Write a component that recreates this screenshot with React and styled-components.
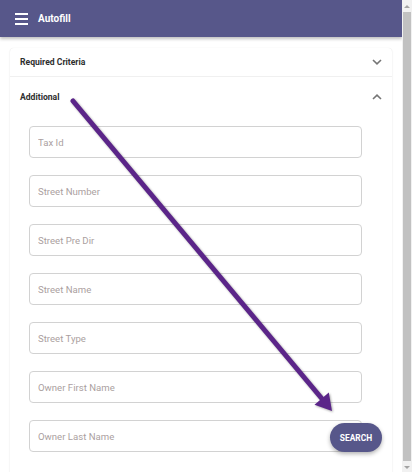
import styled, { createGlobalStyle } from "styled-components";

const GlobalStyle = createGlobalStyle`
    html, body {
        margin: 0;
        padding: 0;
        overflow: hidden;
    }
    body {
        font-family: Roboto, "Liberation Sans", sans-serif;
        background: #fff;
    }
`;

const Shell = styled.div`
    height: 472px;
    width: 412px;
    display: flex;
`;

const Page = styled.div`
    position: relative;
    flex: 1;
    overflow: hidden;
`;

// drawn scrollbar (the headless browser hides the real one)
const ScrollTrack = styled.div`
    width: 10px;
    background: #f1f1f1;
    display: flex;
    flex-direction: column;
    align-items: center;
    padding-top: 1px;
`;

const ScrollArrow = styled.div`
    height: 10px;
    display: flex;
    align-items: center;
    justify-content: center;

    &::after {
        content: "";
        border-left: 3px solid transparent;
        border-right: 3px solid transparent;
        ${(p) => (p.$down ? "border-top: 3px solid #a3a3a3;" : "border-bottom: 3px solid #a3a3a3;")}
    }
`;

const ScrollThumb = styled.div`
    flex: 1;
    width: 8px;
    margin: 1px 0;
    background: #c1c1c1;
`;

const TopBar = styled.header`
    height: 37px;
    background: #57578a;
    display: flex;
    align-items: center;
    gap: 10px;
    padding-left: 15px;
    box-shadow: 0 2px 3px rgba(0, 0, 0, 0.25);
    color: #fff;
`;

const Burger = styled.div`
    width: 13px;
    display: flex;
    flex-direction: column;
    gap: 3px;

    & > span {
        height: 2px;
        background: #fff;
    }
`;

const Title = styled.h1`
    margin: 0;
    font-size: 10px;
    font-weight: 700;
`;

const Main = styled.main`
    padding: 11px 10px 8px 10px;
`;

const Card = styled.section`
    background: #fff;
    border-radius: 4px;
    box-shadow: 0 1px 2px rgba(0, 0, 0, 0.1), 0 0 1px rgba(0, 0, 0, 0.1);
`;

const Summary = styled.div`
    height: ${(p) => (p.$open ? "40px" : "28px")};
    display: flex;
    align-items: center;
    justify-content: space-between;
    padding: 0 10px;
    border-top: ${(p) => (p.$first ? "none" : "1px solid #f0f0f0")};
    font-size: 8.6px;
    font-weight: 700;
    color: #2e2e2e;
`;

const Details = styled.div`
    display: flex;
    flex-direction: column;
    gap: 17px;
    padding: 9px 30px 30px 19px;
`;

const Field = styled.input`
    box-sizing: border-box;
    height: 32px;
    width: 100%;
    border: 1px solid #d2d2d2;
    border-radius: 4px;
    padding: 0 8px;
    font-family: Roboto, "Liberation Sans", sans-serif;
    font-size: 9.6px;
    outline: none;

    &::placeholder {
        color: #ab9f9f;
    }
`;

const Fab = styled.button`
    position: absolute;
    left: 330px;
    top: 423px;
    width: 52px;
    height: 29px;
    border: none;
    border-radius: 15px;
    background: #57578a;
    color: #fff;
    font-family: Roboto, "Liberation Sans", sans-serif;
    font-size: 8.4px;
    font-weight: 700;
    padding: 0;
    box-shadow: 0 2px 4px rgba(0, 0, 0, 0.3);
`;

const Overlay = styled.svg`
    position: absolute;
    left: 0;
    top: 0;
    pointer-events: none;
    filter: drop-shadow(1px 1px 1px rgba(0, 0, 0, 0.35));
`;

const Chevron = ({ up }) => (
    <svg width="10" height="6" viewBox="0 0 10 6">
        <path
            d={up ? "M1 5 L5 1.2 L9 5" : "M1 1 L5 4.8 L9 1"}
            fill="none"
            stroke="#757575"
            strokeWidth="1.6"
        />
    </svg>
);

const fields = [
    "Tax Id",
    "Street Number",
    "Street Pre Dir",
    "Street Name",
    "Street Type",
    "Owner First Name",
    "Owner Last Name",
];

export default function App() {
    return (
        <>
            <GlobalStyle />
            <Shell>
                <Page>
                    <TopBar>
                        <Burger>
                            <span />
                            <span />
                            <span />
                        </Burger>
                        <Title>Autofill</Title>
                    </TopBar>

                    <Main>
                        <Card>
                            <Summary $first>
                                Required Criteria
                                <Chevron />
                            </Summary>
                            <Summary $open>
                                Additional
                                <Chevron up />
                            </Summary>
                            <Details>
                                {fields.map((f) => (
                                    <Field key={f} placeholder={f} />
                                ))}
                            </Details>
                        </Card>
                    </Main>

                    <Fab>SEARCH</Fab>

                    <Overlay width="402" height="472">
                        <line x1="73" y1="101" x2="323" y2="400" stroke="#5b2589" strokeWidth="5" strokeLinecap="round" />
                        <polygon points="332,411 314.5,404.8 328.8,392.6" fill="#5b2589" />
                    </Overlay>
                </Page>

                <ScrollTrack>
                    <ScrollArrow />
                    <ScrollThumb />
                    <ScrollArrow $down />
                </ScrollTrack>
            </Shell>
        </>
    );
}
